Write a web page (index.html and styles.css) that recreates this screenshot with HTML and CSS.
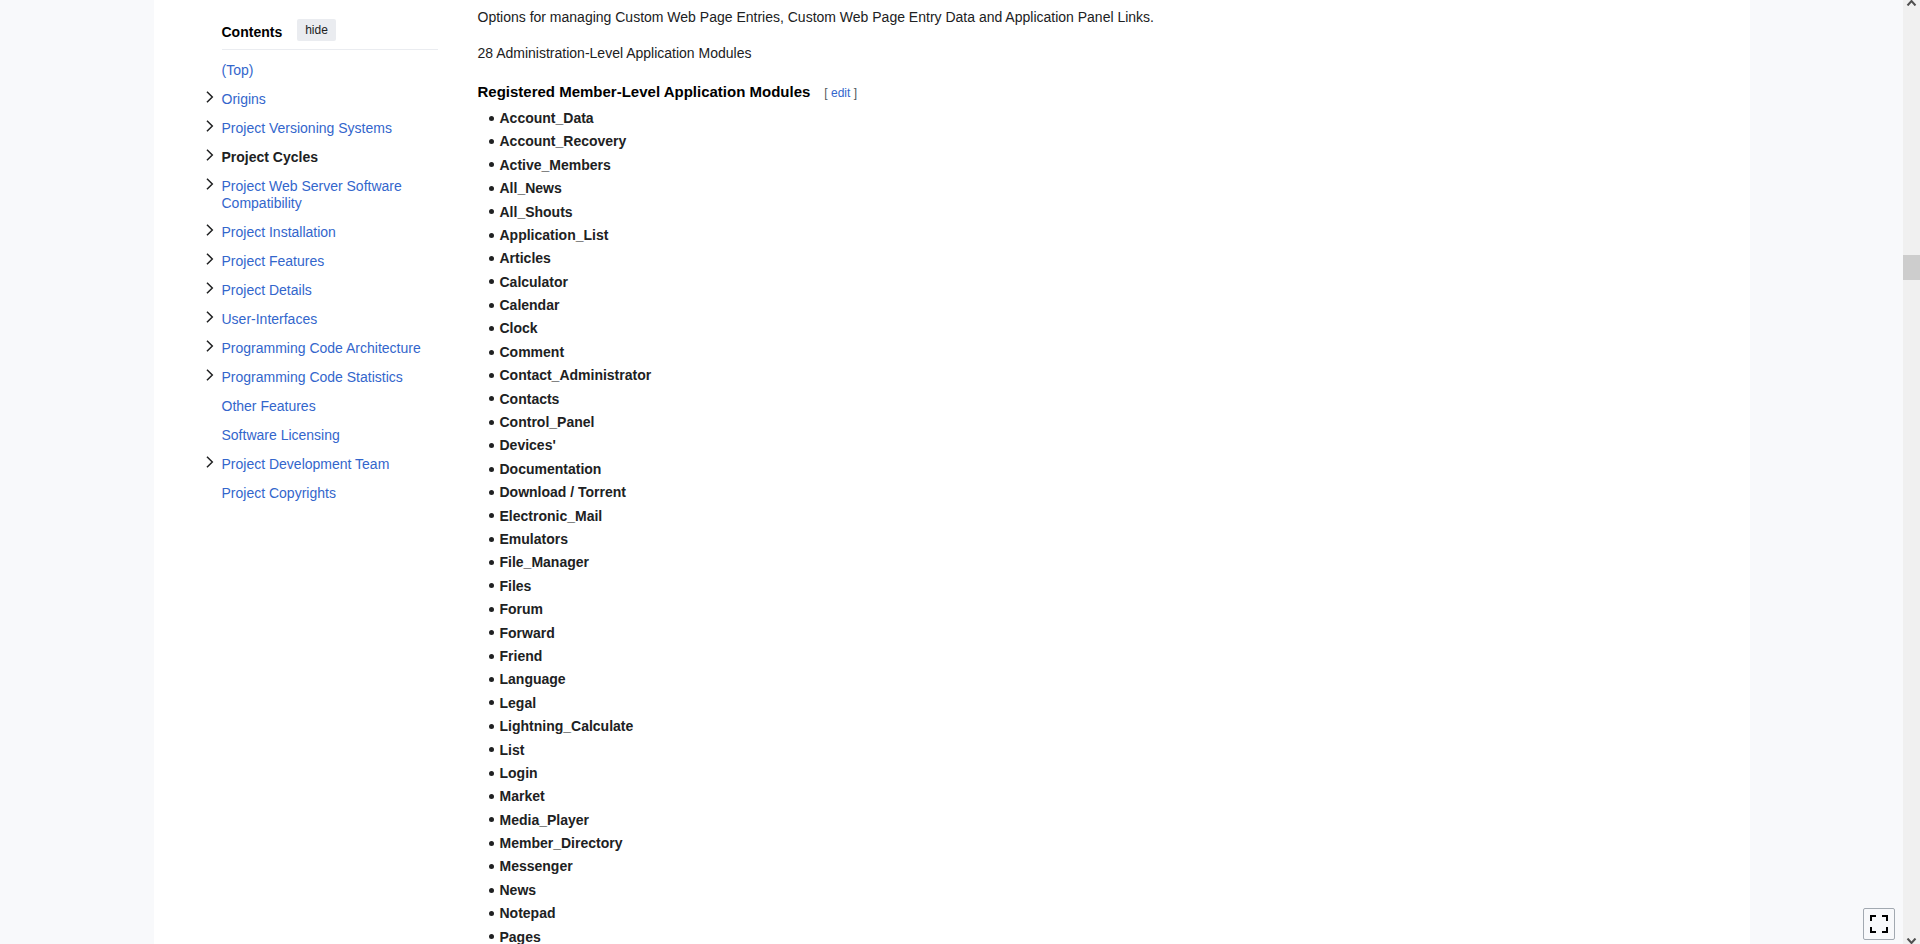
FILE: index.html
```html
<!DOCTYPE html>
<html lang="en">
<head>
<meta charset="utf-8">
<title>Application Modules</title>
<link rel="stylesheet" href="styles.css">
</head>
<body>
<svg class="sprite" aria-hidden="true">
  <symbol id="chevron" viewBox="0 0 24 24"><path d="M9.500 7.200l4.800 4.800-4.800 4.800" fill="none" stroke="#202122" stroke-width="1.500" stroke-linecap="square"/></symbol>
</svg>
<div class="viewport">
  <div class="page">
    <nav class="toc" aria-labelledby="toc-title">
      <div class="toc-header">
        <h2 class="toc-title" id="toc-title">Contents</h2>
        <button class="toc-hide" type="button">hide</button>
      </div>
      <ul class="toc-list">
        <li class="toc-item"><a class="toc-link" href="#top">(Top)</a></li>
        <li class="toc-item"><button class="toc-toggle" type="button" aria-label="Toggle Origins"><svg><use href="#chevron"/></svg></button><a class="toc-link" href="#s1">Origins</a></li>
        <li class="toc-item"><button class="toc-toggle" type="button" aria-label="Toggle Project Versioning Systems"><svg><use href="#chevron"/></svg></button><a class="toc-link" href="#s2">Project Versioning Systems</a></li>
        <li class="toc-item"><button class="toc-toggle" type="button" aria-label="Toggle Project Cycles"><svg><use href="#chevron"/></svg></button><a class="toc-link toc-link-active" href="#s3">Project Cycles</a></li>
        <li class="toc-item"><button class="toc-toggle" type="button" aria-label="Toggle Project Web Server Software Compatibility"><svg><use href="#chevron"/></svg></button><a class="toc-link" href="#s4">Project Web Server Software Compatibility</a></li>
        <li class="toc-item"><button class="toc-toggle" type="button" aria-label="Toggle Project Installation"><svg><use href="#chevron"/></svg></button><a class="toc-link" href="#s5">Project Installation</a></li>
        <li class="toc-item"><button class="toc-toggle" type="button" aria-label="Toggle Project Features"><svg><use href="#chevron"/></svg></button><a class="toc-link" href="#s6">Project Features</a></li>
        <li class="toc-item"><button class="toc-toggle" type="button" aria-label="Toggle Project Details"><svg><use href="#chevron"/></svg></button><a class="toc-link" href="#s7">Project Details</a></li>
        <li class="toc-item"><button class="toc-toggle" type="button" aria-label="Toggle User-Interfaces"><svg><use href="#chevron"/></svg></button><a class="toc-link" href="#s8">User-Interfaces</a></li>
        <li class="toc-item"><button class="toc-toggle" type="button" aria-label="Toggle Programming Code Architecture"><svg><use href="#chevron"/></svg></button><a class="toc-link" href="#s9">Programming Code Architecture</a></li>
        <li class="toc-item"><button class="toc-toggle" type="button" aria-label="Toggle Programming Code Statistics"><svg><use href="#chevron"/></svg></button><a class="toc-link" href="#s10">Programming Code Statistics</a></li>
        <li class="toc-item"><a class="toc-link" href="#s11">Other Features</a></li>
        <li class="toc-item"><a class="toc-link" href="#s12">Software Licensing</a></li>
        <li class="toc-item"><button class="toc-toggle" type="button" aria-label="Toggle Project Development Team"><svg><use href="#chevron"/></svg></button><a class="toc-link" href="#s13">Project Development Team</a></li>
        <li class="toc-item"><a class="toc-link" href="#s14">Project Copyrights</a></li>
      </ul>
    </nav>
    <main class="content">
      <p class="para">Options for managing Custom Web Page Entries, Custom Web Page Entry Data and Application Panel Links.</p>
      <p class="para">28 Administration-Level Application Modules</p>
      <div class="heading">
        <h4 class="heading-text">Registered Member-Level Application Modules</h4>
        <span class="heading-edit">[ <a class="edit-link" href="#edit">edit</a> ]</span>
      </div>
      <ul class="modules">
        <li>Account_Data</li>
        <li>Account_Recovery</li>
        <li>Active_Members</li>
        <li>All_News</li>
        <li>All_Shouts</li>
        <li>Application_List</li>
        <li>Articles</li>
        <li>Calculator</li>
        <li>Calendar</li>
        <li>Clock</li>
        <li>Comment</li>
        <li>Contact_Administrator</li>
        <li>Contacts</li>
        <li>Control_Panel</li>
        <li>Devices'</li>
        <li>Documentation</li>
        <li>Download / Torrent</li>
        <li>Electronic_Mail</li>
        <li>Emulators</li>
        <li>File_Manager</li>
        <li>Files</li>
        <li>Forum</li>
        <li>Forward</li>
        <li>Friend</li>
        <li>Language</li>
        <li>Legal</li>
        <li>Lightning_Calculate</li>
        <li>List</li>
        <li>Login</li>
        <li>Market</li>
        <li>Media_Player</li>
        <li>Member_Directory</li>
        <li>Messenger</li>
        <li>News</li>
        <li>Notepad</li>
        <li>Pages</li>
      </ul>
    </main>
  </div>
  <button class="fullscreen" type="button" aria-label="Toggle limited content width">
    <svg class="fullscreen-icon" viewBox="0 0 18 18"><path d="M0 0h6v2H2v4H0zM12 0h6v6h-2V2h-4zM0 12h2v4h4v2H0zM16 12h2v6h-6v-2h4z"/></svg>
  </button>
</div>
<div class="scrollbar" aria-hidden="true">
  <svg class="scroll-arrow" viewBox="0 0 17 6"><path d="M4.500 5.500l4-4.500 4 4.500" fill="none" stroke="#505050" stroke-width="2"/></svg>
  <div class="scroll-track"><div class="scroll-thumb"></div></div>
  <svg class="scroll-arrow" viewBox="0 0 17 6"><path d="M4.500 .5l4 4.500 4-4.500" fill="none" stroke="#505050" stroke-width="2"/></svg>
</div>
</body>
</html>
```
FILE: styles.css
```css
* {
  box-sizing: border-box;
}

body {
  margin: 0;
  display: flex;
  height: 100vh;
  overflow: hidden;
  background: #f8f9fb;
  color: #202122;
  font-family: "Liberation Sans", Arial, sans-serif;
  font-size: 14px;
  line-height: 1.6;
}

button {
  border: 0;
  padding: 0;
  font-family: inherit;
  cursor: pointer;
}

a {
  color: #3366cc;
  text-decoration: none;
}

a:hover {
  text-decoration: underline;
}

.sprite {
  display: none;
}

.viewport {
  position: relative;
  flex: 1;
  overflow: hidden;
}

.page {
  display: grid;
  grid-template-columns: 240px minmax(0, 1fr);
  column-gap: 40px;
  max-width: 1596px;
  min-height: 100%;
  margin: 0 auto;
  padding: 0 44px;
  background: #fff;
}

/* Table of contents */
.toc-header {
  display: flex;
  align-items: flex-end;
  gap: 15px;
  height: 50px;
  margin: 0 0 6px 24px;
  padding-bottom: 6px;
  border-bottom: 1px solid #eaecf0;
}

.toc-title {
  margin: 0;
  color: #000;
  font-size: 14px;
}

.toc-hide {
  height: 22px;
  margin-bottom: 2px;
  padding: 0 8px;
  border-radius: 2px;
  background: #eaecf0;
  color: #202122;
  font-size: 12px;
}

.toc-list {
  margin: 0;
  padding: 0;
  list-style: none;
  line-height: 17px;
}

.toc-item {
  display: grid;
  grid-template-columns: 24px 1fr;
  align-items: start;
}

.toc-toggle {
  height: 24px;
  background: none;
}

.toc-toggle svg {
  display: block;
  width: 24px;
  height: 24px;
}

.toc-link {
  grid-column: 2;
  padding: 6px 0;
}

.toc-link-active {
  color: #202122;
  font-weight: bold;
}

/* Article body */
.content {
  padding-top: 6px;
}

.para {
  margin: 0 0 14px;
}

.heading {
  display: flex;
  align-items: baseline;
  gap: 14px;
  margin-top: 16px;
}

.heading-text {
  margin: 0;
  color: #000;
  font-size: 15px;
  line-height: 22px;
}

.heading-edit {
  color: #54595d;
  font-size: 12px;
}

.modules {
  margin: 4px 0 0;
  padding-left: 11px;
  list-style: none;
  font-weight: bold;
}

.modules li {
  display: flex;
  align-items: center;
  gap: 6px;
  margin-bottom: 1px;
}

.modules li::before {
  content: "";
  width: 5px;
  height: 5px;
  border-radius: 50%;
  background: #202122;
}

/* Floating width toggle */
.fullscreen {
  position: absolute;
  right: 8px;
  bottom: 4px;
  display: grid;
  place-items: center;
  width: 32px;
  height: 32px;
  border: 1px solid #a2a9b1;
  border-radius: 2px;
  background: #f8f9fb;
}

.fullscreen-icon {
  width: 18px;
  height: 18px;
}

/* Scrollbar */
.scrollbar {
  display: flex;
  flex-direction: column;
  width: 17px;
  background: #f0f0f0;
}

.scroll-arrow {
  width: 17px;
  height: 6px;
}

.scroll-track {
  flex: 1;
  padding-top: 249px;
}

.scroll-thumb {
  height: 25px;
  background: #cdcdcd;
}
```
